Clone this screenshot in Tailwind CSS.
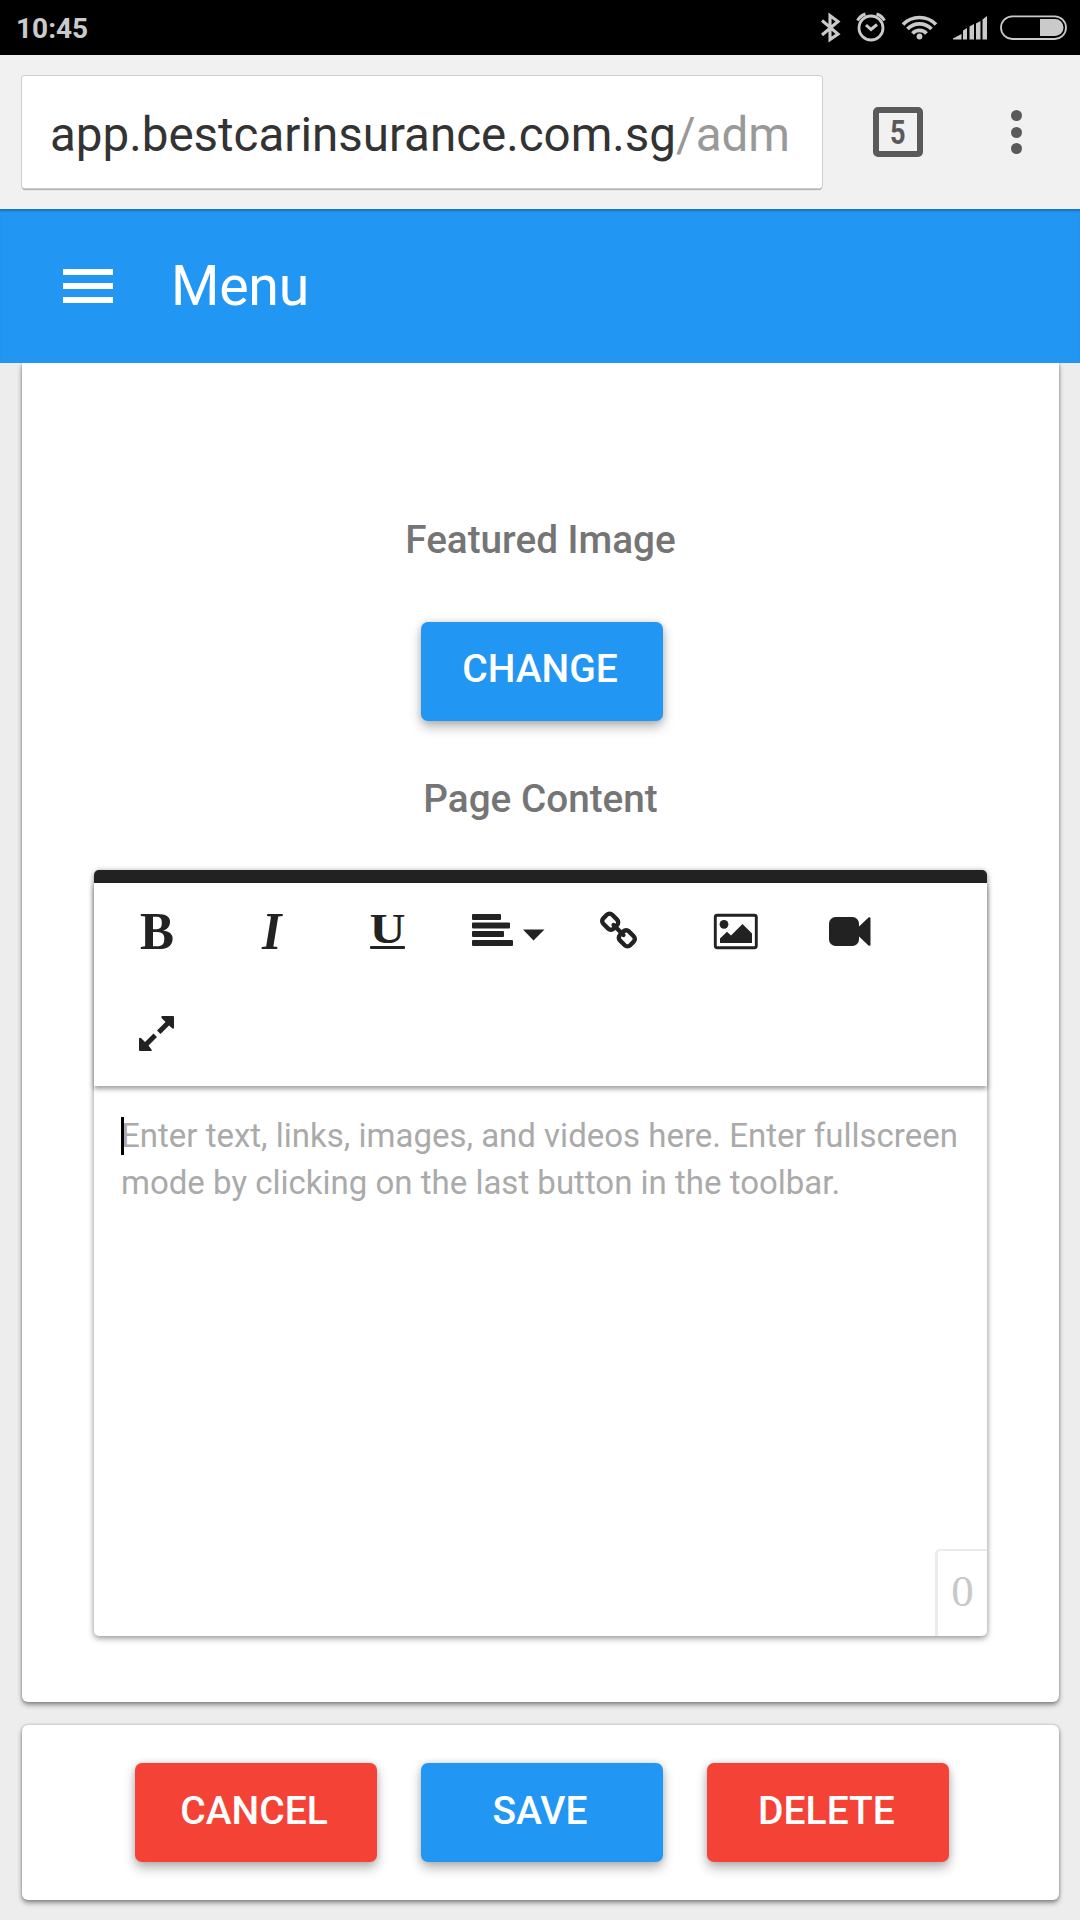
<!DOCTYPE html>
<html lang="en">
<head>
<meta charset="utf-8">
<title>Menu</title>
<script src="https://cdn.jsdelivr.net/npm/@tailwindcss/browser@4"></script>
</head>
<body class="flex h-[1920px] w-[1080px] flex-col overflow-hidden bg-[#ededed] font-[Roboto,sans-serif]">
  <!-- Status bar -->
  <div class="flex h-[55px] shrink-0 items-center justify-between bg-black pl-4">
    <span class="pt-0.5 text-[28px] font-bold leading-none text-[#cacaca]">10:45</span>
    <svg class="h-[55px] w-[260px]" viewBox="820 0 260 55" fill="none" stroke="#cacaca" stroke-width="2.8">
      <path d="M822 20.500 838 34 830 39.500V15.500L838 21.500 822 35" stroke-width="3.100"/>
      <circle cx="871" cy="28" r="12"/>
      <path d="M866 25l5 4.500 6-5M857.500 20.500q3-5 8-6.500M884.500 20.500q-3-5-8-6.500" stroke-width="3"/>
      <path d="M903 24.500a23 23 0 0 1 33 0M907.500 29a16.500 16.500 0 0 1 24 0M912.500 33.500a9.500 9.500 0 0 1 14 0" stroke-width="3.700"/>
      <circle cx="919.500" cy="36.500" r="2.900" fill="#cacaca" stroke="none"/>
      <path d="M953 39.500V38.500l8.500-4.500v5.500zM963 39.500v-9l4-2.500v11.500zM969.500 39.500v-13l4.500-2.500v15.500zM976 39.500v-16l4.500-2.500v18.500zM982.500 39.500V19.500l4.500-3.500v23.500z" fill="#cacaca" stroke="none"/>
      <rect x="1001" y="16.300" width="65" height="22.700" rx="11.300" stroke-width="1.800"/>
      <path d="M1040 19h15a8.500 8.500 0 0 1 0 17h-15z" fill="#cacaca" stroke="none"/>
    </svg>
  </div>

  <!-- Browser toolbar -->
  <div class="flex h-[154px] shrink-0 items-start bg-[#f1f1f1] pl-[22px] pt-[21px]">
    <div class="flex h-[112px] w-[800px] items-center overflow-hidden rounded-[3px] bg-white pl-7 pt-[7px] text-[47.500px] text-[#333] shadow-[0_0_0_1px_#cfcfcf,0_2px_1px_#aaa]">
      <span>app.bestcarinsurance.com.sg</span><span class="text-[#999]">/adm</span>
    </div>
    <div class="ml-[51px] mt-[31px] flex size-[50px] items-center justify-center rounded-[5px] border-[6px] border-[#5a5a5a] text-[#5a5a5a]">
      <span class="scale-x-[0.8] text-[34px] font-bold leading-none">5</span>
    </div>
    <div class="ml-[88px] mt-[34px] flex flex-col gap-[5.500px]">
      <i class="size-[11px] rounded-full bg-[#5a5a5a]"></i>
      <i class="size-[11px] rounded-full bg-[#5a5a5a]"></i>
      <i class="size-[11px] rounded-full bg-[#5a5a5a]"></i>
    </div>
  </div>

  <!-- App bar -->
  <header class="relative z-10 flex h-[154px] shrink-0 items-center bg-[#2196f3] pl-[63px] text-white shadow-[inset_0_3px_2px_-1px_#1b72b8]">
    <div class="flex flex-col gap-2">
      <i class="h-1.5 w-[50px] bg-white"></i>
      <i class="h-1.5 w-[50px] bg-white"></i>
      <i class="h-1.5 w-[50px] bg-white"></i>
    </div>
    <span class="ml-[58px] pt-0.5 text-[55.500px] leading-none tracking-[-0.3px]">Menu</span>
  </header>

  <!-- Page form -->
  <main class="ml-[22px] flex h-[1339px] w-[1037px] shrink-0 flex-col items-center rounded-b-[6px] bg-white pt-[153px] shadow-[0_3px_5px_rgba(0,0,0,0.4),0_0_3px_rgba(0,0,0,0.25)]">
    <h2 class="text-[38.700px] font-medium leading-[48px] text-[#757575]">Featured Image</h2>
    <button class="ml-[3px] mt-[58px] h-[98.500px] w-[242px] rounded-[7px] bg-[#2196f3] pb-[5px] pr-[9px] text-[39px] font-medium text-white shadow-[0_6px_12px_rgba(0,0,0,0.28),0_0_6px_rgba(0,0,0,0.14)]"><span class="ml-[5px]">CHANGE</span></button>
    <h2 class="mt-[54.500px] text-[38.700px] font-medium leading-[48px] text-[#757575]">Page Content</h2>

    <section class="mt-[47px] flex h-[766px] w-[893px] flex-col rounded-[5px] border-t-[13px] border-[#222] bg-white shadow-[0_3px_6px_rgba(0,0,0,0.3),0_0_5px_rgba(0,0,0,0.22)]">
      <div class="flex h-[203px] shrink-0 flex-wrap content-start pl-[5px] text-[#222] shadow-[0_3px_5px_rgba(0,0,0,0.38)]">
        <svg class="h-[102px] w-[116px]" viewBox="99 883 116 102" fill="currentColor"><text x="140" y="949" class="font-[Liberation_Serif,serif] text-[53px] font-bold" textLength="34" lengthAdjust="spacingAndGlyphs">B</text></svg>
        <svg class="h-[102px] w-[115px]" viewBox="215 883 115 102" fill="currentColor"><text x="262" y="949" class="font-[Liberation_Serif,serif] text-[53px] font-bold italic" textLength="19.500" lengthAdjust="spacingAndGlyphs">I</text></svg>
        <svg class="h-[102px] w-[116px]" viewBox="330 883 116 102" fill="currentColor"><text x="369.500" y="943" class="font-[Liberation_Serif,serif] text-[43px] font-bold" textLength="36" lengthAdjust="spacingAndGlyphs">U</text><rect x="370" y="946" width="35" height="3" rx="1"/></svg>
        <svg class="h-[102px] w-[115px]" viewBox="446 883 115 102" fill="currentColor"><rect x="472" y="914" width="29" height="6" rx="1"/><rect x="472" y="922.500" width="38" height="6" rx="1"/><rect x="472" y="931" width="32" height="6" rx="1"/><rect x="472" y="940" width="41" height="6" rx="1"/><path d="M523 929.500h21.500L533.500 940.500z"/></svg>
        <svg class="h-[102px] w-[115px]" viewBox="561 883 115 102" fill="none" stroke="currentColor" stroke-width="4.400"><g transform="rotate(45 618.500 930)"><rect x="599.500" y="923.700" width="14.500" height="12.600" rx="3.800"/><rect x="623" y="923.700" width="14.500" height="12.600" rx="3.800"/><path d="M611.500 930h14" stroke-linecap="round"/></g></svg>
        <svg class="h-[102px] w-[116px]" viewBox="676 883 116 102" fill="currentColor"><rect x="715.300" y="915.300" width="41" height="32.500" rx="2" fill="none" stroke="currentColor" stroke-width="2.900"/><circle cx="724" cy="924.300" r="4.400"/><path d="M720 943v-4.500l7-6.700 4 3.700 11.500-11.500 9.500 9.500v9.500z"/></svg>
        <svg class="h-[102px] w-[115px]" viewBox="792 883 115 102" fill="currentColor"><rect x="829" y="917" width="30" height="29" rx="6.500"/><path d="M858 927.500l10.500-10q2-1 2 1v26q0 2-2 1l-10.500-10z"/></svg>
        <svg class="h-[102px] w-[116px]" viewBox="99 985 116 102" fill="currentColor"><path d="M162 1016h11q1 0 1 1v11q-.5 1-1.500.5l-3.500-3-8.500 8.500-3.500-3.500 8.500-8.500-4-4q-.5-1.500.5-2zM140 1051h11q1.500-.5.500-1.500l-3-4 8.500-8.500-3.500-3.500-8.500 8.500-4-4q-1.500-.5-2 .5v11.500q0 1 1 1z"/></svg>
      </div>
      <div class="relative grow pl-[27px] pr-[20px] pt-[26px] text-[33px] leading-[47px] text-[#aaa]">
        <i class="absolute left-[27px] top-[31px] h-[38px] w-[3px] bg-black"></i>
        <p>Enter text, links, images, and videos here. Enter fullscreen mode by clicking on the last button in the toolbar.</p>
        <span class="absolute bottom-0 right-0 flex h-[87px] w-[52px] items-center justify-center rounded-tl-[5px] border-l-[3px] border-t-[2px] border-[#ebebeb] pb-[5px] font-[Liberation_Serif,serif] text-[45px] text-[#c8c8c8]">0</span>
      </div>
    </section>
  </main>

  <!-- Actions -->
  <footer class="ml-[22px] mt-[23px] flex h-[175px] w-[1037px] shrink-0 justify-center gap-11 rounded-[6px] bg-white pl-[3px] pt-[38px] shadow-[0_3px_5px_rgba(0,0,0,0.4),0_0_3px_rgba(0,0,0,0.25)]">
    <button class="h-[99px] w-[242px] rounded-[7px] bg-[#f44336] pb-[3px] pr-[4px] text-[39px] font-medium text-white shadow-[0_6px_12px_rgba(0,0,0,0.28),0_0_6px_rgba(0,0,0,0.14)]">CANCEL</button>
    <button class="h-[99px] w-[242px] rounded-[7px] bg-[#2196f3] pb-[3px] pr-[4px] text-[39px] font-medium text-white shadow-[0_6px_12px_rgba(0,0,0,0.28),0_0_6px_rgba(0,0,0,0.14)]">SAVE</button>
    <button class="h-[99px] w-[242px] rounded-[7px] bg-[#f44336] pb-[3px] pr-[3px] text-[39px] font-medium text-white shadow-[0_6px_12px_rgba(0,0,0,0.28),0_0_6px_rgba(0,0,0,0.14)]">DELETE</button>
  </footer>
</body>
</html>
